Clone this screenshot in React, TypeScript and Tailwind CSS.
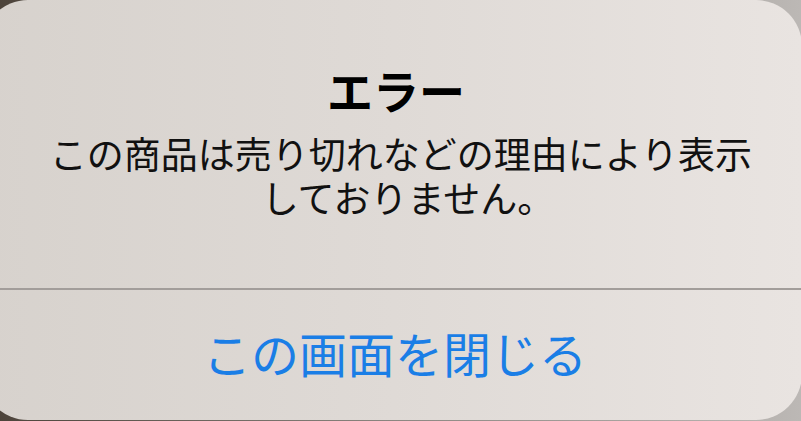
import React from "react";

export default function App() {
  return (
    <div className="w-[801px] h-[421px] overflow-hidden bg-gradient-to-r from-[#4d443b] via-[#8d8782] to-[#bcb8b5]">
      <div
        className="ml-[-18px] w-[820px] h-[420px] rounded-[46px] bg-gradient-to-r from-[#d7d2cd] via-[#dfdad6] to-[#e9e4e1] flex flex-col"
        style={{ fontFamily: '"Noto Sans CJK JP", "Noto Sans", sans-serif' }}
      >
        <div className="h-[288px] pl-[18px] pt-[60px] flex flex-col items-center text-black">
          <div className="pr-[10px] text-[46px] leading-[58px] font-bold">エラー</div>
          <div className="mt-[13px] text-[37px] leading-[44px] font-normal text-center text-[#111]">
            <div>この商品は売り切れなどの理由により表示</div>
            <div className="pl-[14px]">しておりません。</div>
          </div>
        </div>
        <div className="h-[2px] bg-[#a29d9a]" />
        <div className="flex-1 pl-[6px] flex items-center justify-center pb-[6px]">
          <div className="text-[48px] leading-[58px] text-[#1a7ee6]">この画面を閉じる</div>
        </div>
      </div>
    </div>
  );
}
